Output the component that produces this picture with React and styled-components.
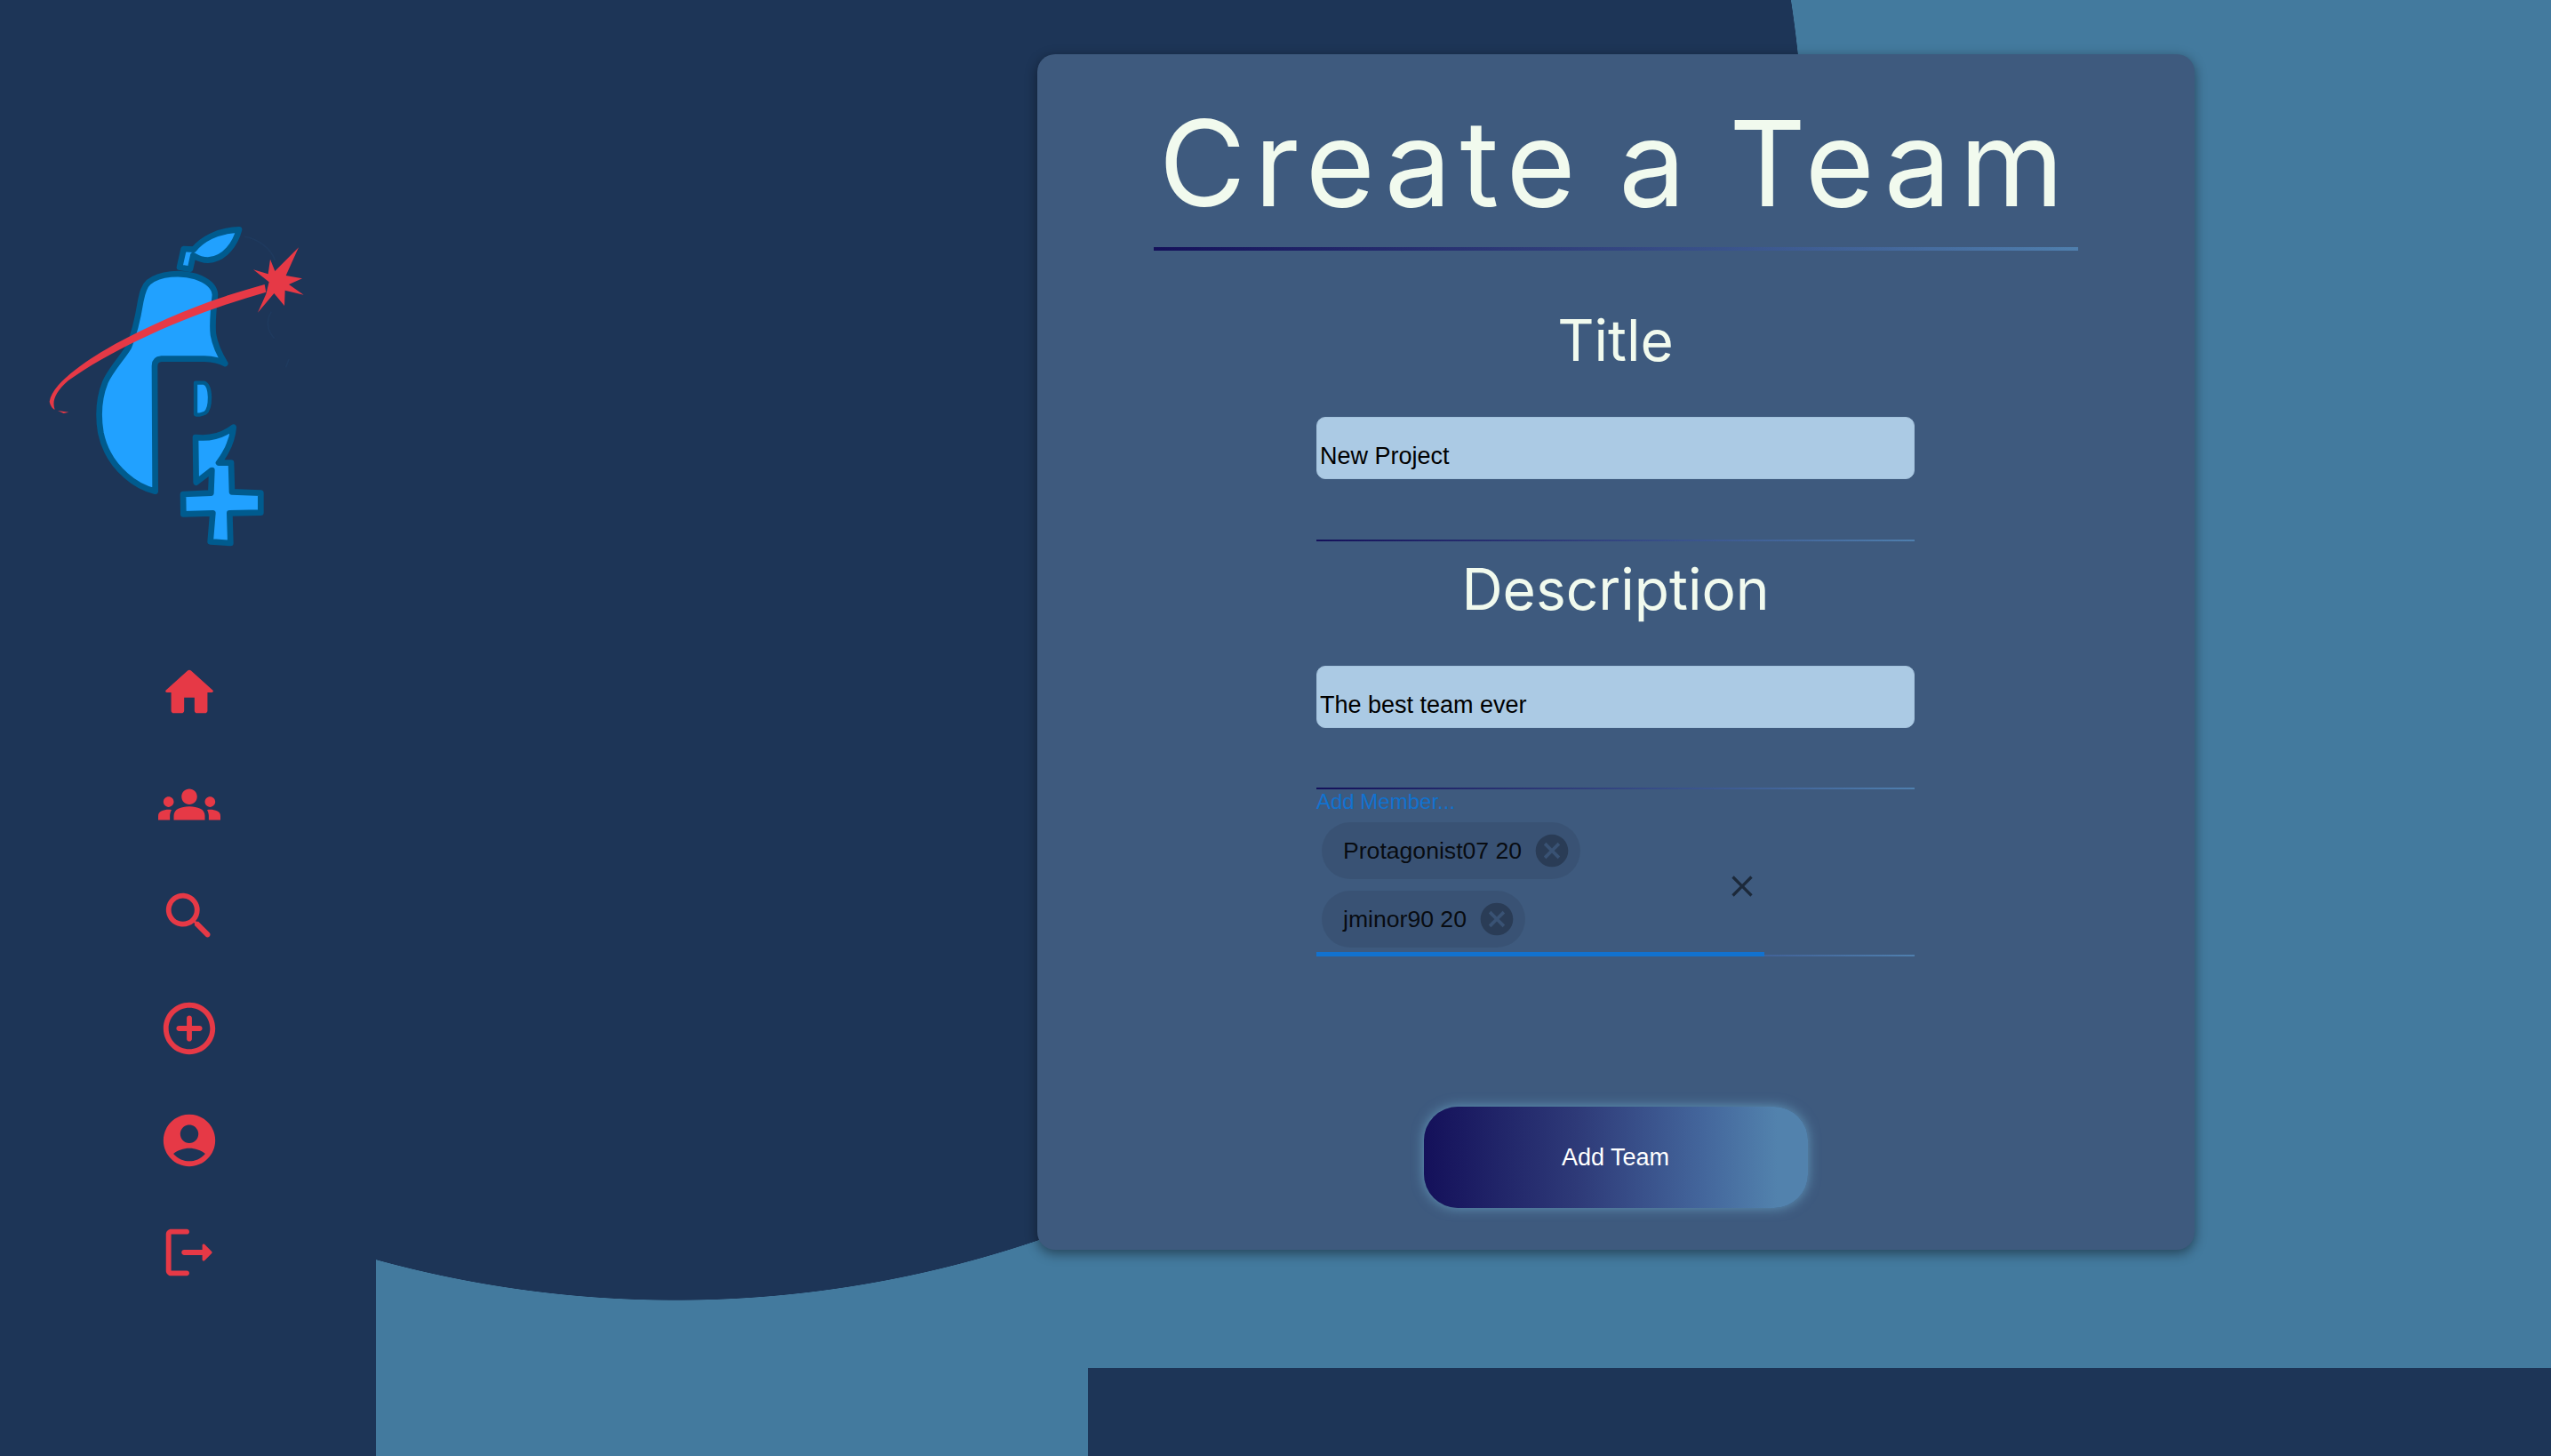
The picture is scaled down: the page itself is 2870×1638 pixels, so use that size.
import styled, { createGlobalStyle } from "styled-components";

const GlobalStyle = createGlobalStyle`
  html, body {
    margin: 0;
    padding: 0;
  }
  body {
    font-family: "Liberation Sans", Arial, sans-serif;
    background-color: #1d3557;
    overflow: hidden;
  }
`;

const Page = styled.div`
  display: grid;
  grid-template-columns: 423px 1fr;
  height: 1638px;
  overflow: hidden;
`;

const Sidebar = styled.aside`
  display: flex;
  flex-direction: column;
  background-color: #1d3557;
  padding: 230px 0 0 30px;
`;

const LogoMark = styled.svg`
  display: block;
  width: 340px;
  height: 400px;
`;

const Nav = styled.nav`
  display: flex;
  flex-direction: column;
  gap: 56px;
  margin: 114px 0 0 148px;
`;

const NavIcon = styled.svg`
  display: block;
  width: 70px;
  height: 70px;
  fill: #e63946;
`;

const Main = styled.main`
  display: flex;
  flex-direction: column;
  justify-content: space-between;
  background-color: #437a9e;
  background-image: radial-gradient(circle 1270px at 337px 193px, #1d3557 99.95%, transparent 100%);
`;

const Card = styled.section`
  box-sizing: border-box;
  display: flex;
  flex-direction: column;
  align-items: center;
  width: 1302px;
  height: 1345px;
  margin: 61px 0 0 744px;
  padding: 52px 1px 0 0;
  background-color: #3e5a7e;
  border-radius: 20px;
  box-shadow: 0 4px 14px rgba(0, 0, 0, 0.45);
`;

const PageTitle = styled.h1`
  margin: 0;
  color: #f1faee;
  font-family: Inter, "Liberation Sans", sans-serif;
  font-size: 134px;
  font-weight: 400;
  line-height: 140px;
  letter-spacing: 9.5px;
  word-spacing: -8px;
  white-space: nowrap;
`;

const Rule = styled.div`
  flex: none;
  width: ${(p) => p.$width}px;
  height: ${(p) => p.$height || 2}px;
  margin-top: ${(p) => p.$top}px;
  background: linear-gradient(90deg, #14105a 0%, #2e3a78 40%, #4f7fae 100%);
`;

const FieldTitle = styled.h2`
  margin: ${(p) => p.$top}px 0 0;
  color: #f1faee;
  font-family: Inter, "Liberation Sans", sans-serif;
  font-size: 64px;
  font-weight: 400;
  line-height: 70px;
`;

const TextInput = styled.input`
  box-sizing: border-box;
  display: block;
  flex: none;
  width: 673px;
  height: 70px;
  margin-top: ${(p) => p.$top}px;
  padding: 18px 3px 0;
  border: 1px solid #a4c2dc;
  border-radius: 10px;
  outline: none;
  background-color: #abcae4;
  color: #000;
  font-family: "Liberation Sans", Arial, sans-serif;
  font-size: 27px;
`;

const MemberField = styled.div`
  position: relative;
  box-sizing: border-box;
  flex: none;
  width: 673px;
  height: 188px;
`;

const MemberLabel = styled.label`
  display: block;
  height: 32px;
  color: #1272cf;
  font-size: 24px;
  line-height: 27px;
`;

const ChipList = styled.div`
  display: flex;
  flex-direction: column;
  align-items: flex-start;
  gap: 13px;
  padding: 5px 0 0 6px;
`;

const Chip = styled.div`
  box-sizing: border-box;
  display: inline-flex;
  align-items: center;
  height: 64px;
  padding: 0 10px 0 24px;
  border-radius: 32px;
  background-color: rgba(0, 0, 0, 0.08);
  color: rgba(0, 0, 0, 0.87);
  font-size: 26.6px;
  white-space: nowrap;
`;

const ChipRemove = styled.svg`
  flex: none;
  width: 44px;
  height: 44px;
  margin-left: 12px;
  fill: rgba(0, 0, 0, 0.26);
`;

const ClearIcon = styled.svg`
  position: absolute;
  top: 89px;
  left: 459px;
  width: 40px;
  height: 40px;
  fill: rgba(0, 0, 0, 0.54);
`;

const FocusLine = styled.div`
  position: absolute;
  left: 0;
  bottom: 0;
  height: 5px;
  background-color: #1272cf;
`;

const SubmitButton = styled.button`
  flex: none;
  width: 432px;
  height: 114px;
  margin-top: 169px;
  border: none;
  border-radius: 38px;
  background: linear-gradient(90deg, #14105a 0%, #2e3a78 40%, #43659b 72%, #5282ad 92%);
  box-shadow: 0 0 14px rgba(110, 170, 205, 0.75);
  color: #fff;
  font-family: "Liberation Sans", Arial, sans-serif;
  font-size: 27px;
`;

const BottomBar = styled.div`
  height: 99px;
  margin-left: 801px;
  background-color: #1d3557;
`;

function Logo() {
  return (
    <LogoMark viewBox="0 0 1020 1200">
      <g fill="none" stroke="#1f3a5e" strokeWidth="5">
        <path d="M735 108C785 118 825 150 838 188" />
        <path d="M826 362C808 390 810 425 836 452" />
        <path d="M885 522L875 550" />
      </g>
      <g fill="#21a1ff" stroke="#005b8e" strokeWidth="20" strokeLinejoin="round">
        <path d="M434 968L432 545C432 530 440 522 455 521L600 521C630 522 652 527 670 537C650 505 636 475 630 440C625 400 632 340 636 305C634 275 605 255 570 243C520 228 450 232 412 262C395 277 390 300 385 325C376 380 362 440 345 480C325 515 285 555 265 600C245 650 240 710 250 770C262 830 295 880 335 915C365 942 400 960 434 968Z" />
        <path d="M516 212L530 150L564 152C590 120 640 88 717 85C705 130 670 185 612 188C590 188 575 180 562 172L552 218Z" />
        <path d="M570 602L598 602C612 606 617 625 618 650C618 675 615 695 602 704C590 710 575 712 570 708Z" strokeWidth="13" />
        <path d="M570 786C620 792 665 778 698 752C695 790 680 830 648 872L690 872L693 970L790 974L790 1040L685 1042L688 1143L620 1138L628 1042L529 1045L528 978L622 974L625 897L572 938Z" />
      </g>
      <g fill="#e63946">
        <path d="M803 270C600 325 440 395 300 470C220 515 90 595 77 665C80 680 88 690 95 692C85 665 95 635 140 595C300 480 560 365 808 296Z" />
        <path d="M105 696L142 701L125 705Z" />
        <path d="M822 185L838 225L918 145L875 240L930 250L885 270L935 305L872 290L870 342L835 300L780 365L808 302L818 262L765 220L815 235Z" />
      </g>
    </LogoMark>
  );
}

const navPaths = [
  "M10 19v-5h4v5c0 .55.45 1 1 1h3c.55 0 1-.45 1-1v-7h1.7c.46 0 .68-.57.33-.87L12.67 3.6c-.38-.34-.96-.34-1.34 0l-8.36 7.53c-.34.3-.13.87.33.87H5v7c0 .55.45 1 1 1h3c.55 0 1-.45 1-1z",
  "M12 12.75c1.63 0 3.07.39 4.24.9 1.08.48 1.76 1.56 1.76 2.73V18H6v-1.61c0-1.18.68-2.26 1.76-2.73 1.17-.52 2.61-.91 4.24-.91zM4 13c1.1 0 2-.9 2-2s-.9-2-2-2-2 .9-2 2 .9 2 2 2zm1.13 1.1c-.37-.06-.74-.1-1.13-.1-.99 0-1.93.21-2.79.58C.35 14.94 0 15.62 0 16.43V18h4.5v-1.61c0-.83.23-1.61.63-2.29zM20 13c1.1 0 2-.9 2-2s-.9-2-2-2-2 .9-2 2 .9 2 2 2zm4 3.43c0-.81-.35-1.49-1.21-1.85-.86-.37-1.8-.58-2.79-.58-.39 0-.76.04-1.13.1.4.68.63 1.46.63 2.29V18H24v-1.57zM12 6c1.66 0 3 1.34 3 3s-1.34 3-3 3-3-1.34-3-3 1.34-3 3-3z",
  "M15.5 14h-.79l-.28-.27c1.2-1.4 1.82-3.31 1.48-5.34-.47-2.78-2.79-5-5.59-5.34-4.2-.52-7.75 3.04-7.24 7.24.34 2.8 2.56 5.12 5.34 5.59 2.03.34 3.94-.28 5.34-1.48l.27.28v.79l4.25 4.25c.41.41 1.08.41 1.49 0 .41-.41.41-1.08 0-1.49L15.5 14zm-6 0C7.01 14 5 11.99 5 9.5S7.01 5 9.5 5 14 7.01 14 9.5 11.99 14 9.5 14z",
  "M12 7c-.55 0-1 .45-1 1v3H8c-.55 0-1 .45-1 1s.45 1 1 1h3v3c0 .55.45 1 1 1s1-.45 1-1v-3h3c.55 0 1-.45 1-1s-.45-1-1-1h-3V8c0-.55-.45-1-1-1zm0-5C6.48 2 2 6.48 2 12s4.48 10 10 10 10-4.48 10-10S17.52 2 12 2zm0 18c-4.41 0-8-3.59-8-8s3.59-8 8-8 8 3.59 8 8-3.59 8-8 8z",
  "M12 2C6.48 2 2 6.48 2 12s4.48 10 10 10 10-4.48 10-10S17.52 2 12 2zm0 4c1.93 0 3.5 1.57 3.5 3.5S13.93 13 12 13s-3.5-1.57-3.5-3.5S10.07 6 12 6zm0 14c-2.03 0-4.43-.82-6.14-2.88C7.55 15.8 9.68 15 12 15s4.45.8 6.14 2.12C16.43 19.18 14.03 20 12 20z",
  "M5 5h6c.55 0 1-.45 1-1s-.45-1-1-1H5c-1.1 0-2 .9-2 2v14c0 1.1.9 2 2 2h6c.55 0 1-.45 1-1s-.45-1-1-1H5V5zM20.65 11.65l-2.79-2.79c-.32-.32-.86-.1-.86.35V11h-7c-.55 0-1 .45-1 1s.45 1 1 1h7v1.79c0 .45.54.67.85.35l2.79-2.79c.2-.19.2-.51.01-.7z",
];

const members = ["Protagonist07 20", "jminor90 20"];

function App() {
  return (
    <Page>
      <GlobalStyle />
      <Sidebar>
        <Logo />
        <Nav>
          {navPaths.map((d) => (
            <NavIcon key={d} viewBox="0 0 24 24">
              <path d={d} />
            </NavIcon>
          ))}
        </Nav>
      </Sidebar>
      <Main>
        <Card>
          <PageTitle>Create a Team</PageTitle>
          <Rule $width={1040} $height={4} $top={25} />
          <FieldTitle $top={66}>Title</FieldTitle>
          <TextInput $top={51} defaultValue="New Project" />
          <Rule $width={673} $top={68} />
          <FieldTitle $top={19}>Description</FieldTitle>
          <TextInput $top={51} defaultValue="The best team ever" />
          <Rule $width={673} $top={67} />
          <MemberField>
            <MemberLabel>Add Member...</MemberLabel>
            <ChipList>
              {members.map((name) => (
                <Chip key={name}>
                  {name}
                  <ChipRemove viewBox="0 0 24 24">
                    <path d="M12 2C6.47 2 2 6.47 2 12s4.47 10 10 10 10-4.47 10-10S17.53 2 12 2zm5 13.59L15.59 17 12 13.41 8.41 17 7 15.59 10.59 12 7 8.41 8.41 7 12 10.59 15.59 7 17 8.41 13.41 12 17 15.59z" />
                  </ChipRemove>
                </Chip>
              ))}
            </ChipList>
            <ClearIcon viewBox="0 0 24 24">
              <path d="M19 6.41L17.59 5 12 10.59 6.41 5 5 6.41 10.59 12 5 17.59 6.41 19 12 13.41 17.59 19 19 17.59 13.41 12z" />
            </ClearIcon>
            <FocusLine style={{ width: "504px" }} />
          </MemberField>
          <Rule $width={673} $top={-2} />
          <SubmitButton>Add Team</SubmitButton>
        </Card>
        <BottomBar />
      </Main>
    </Page>
  );
}

export default App;
